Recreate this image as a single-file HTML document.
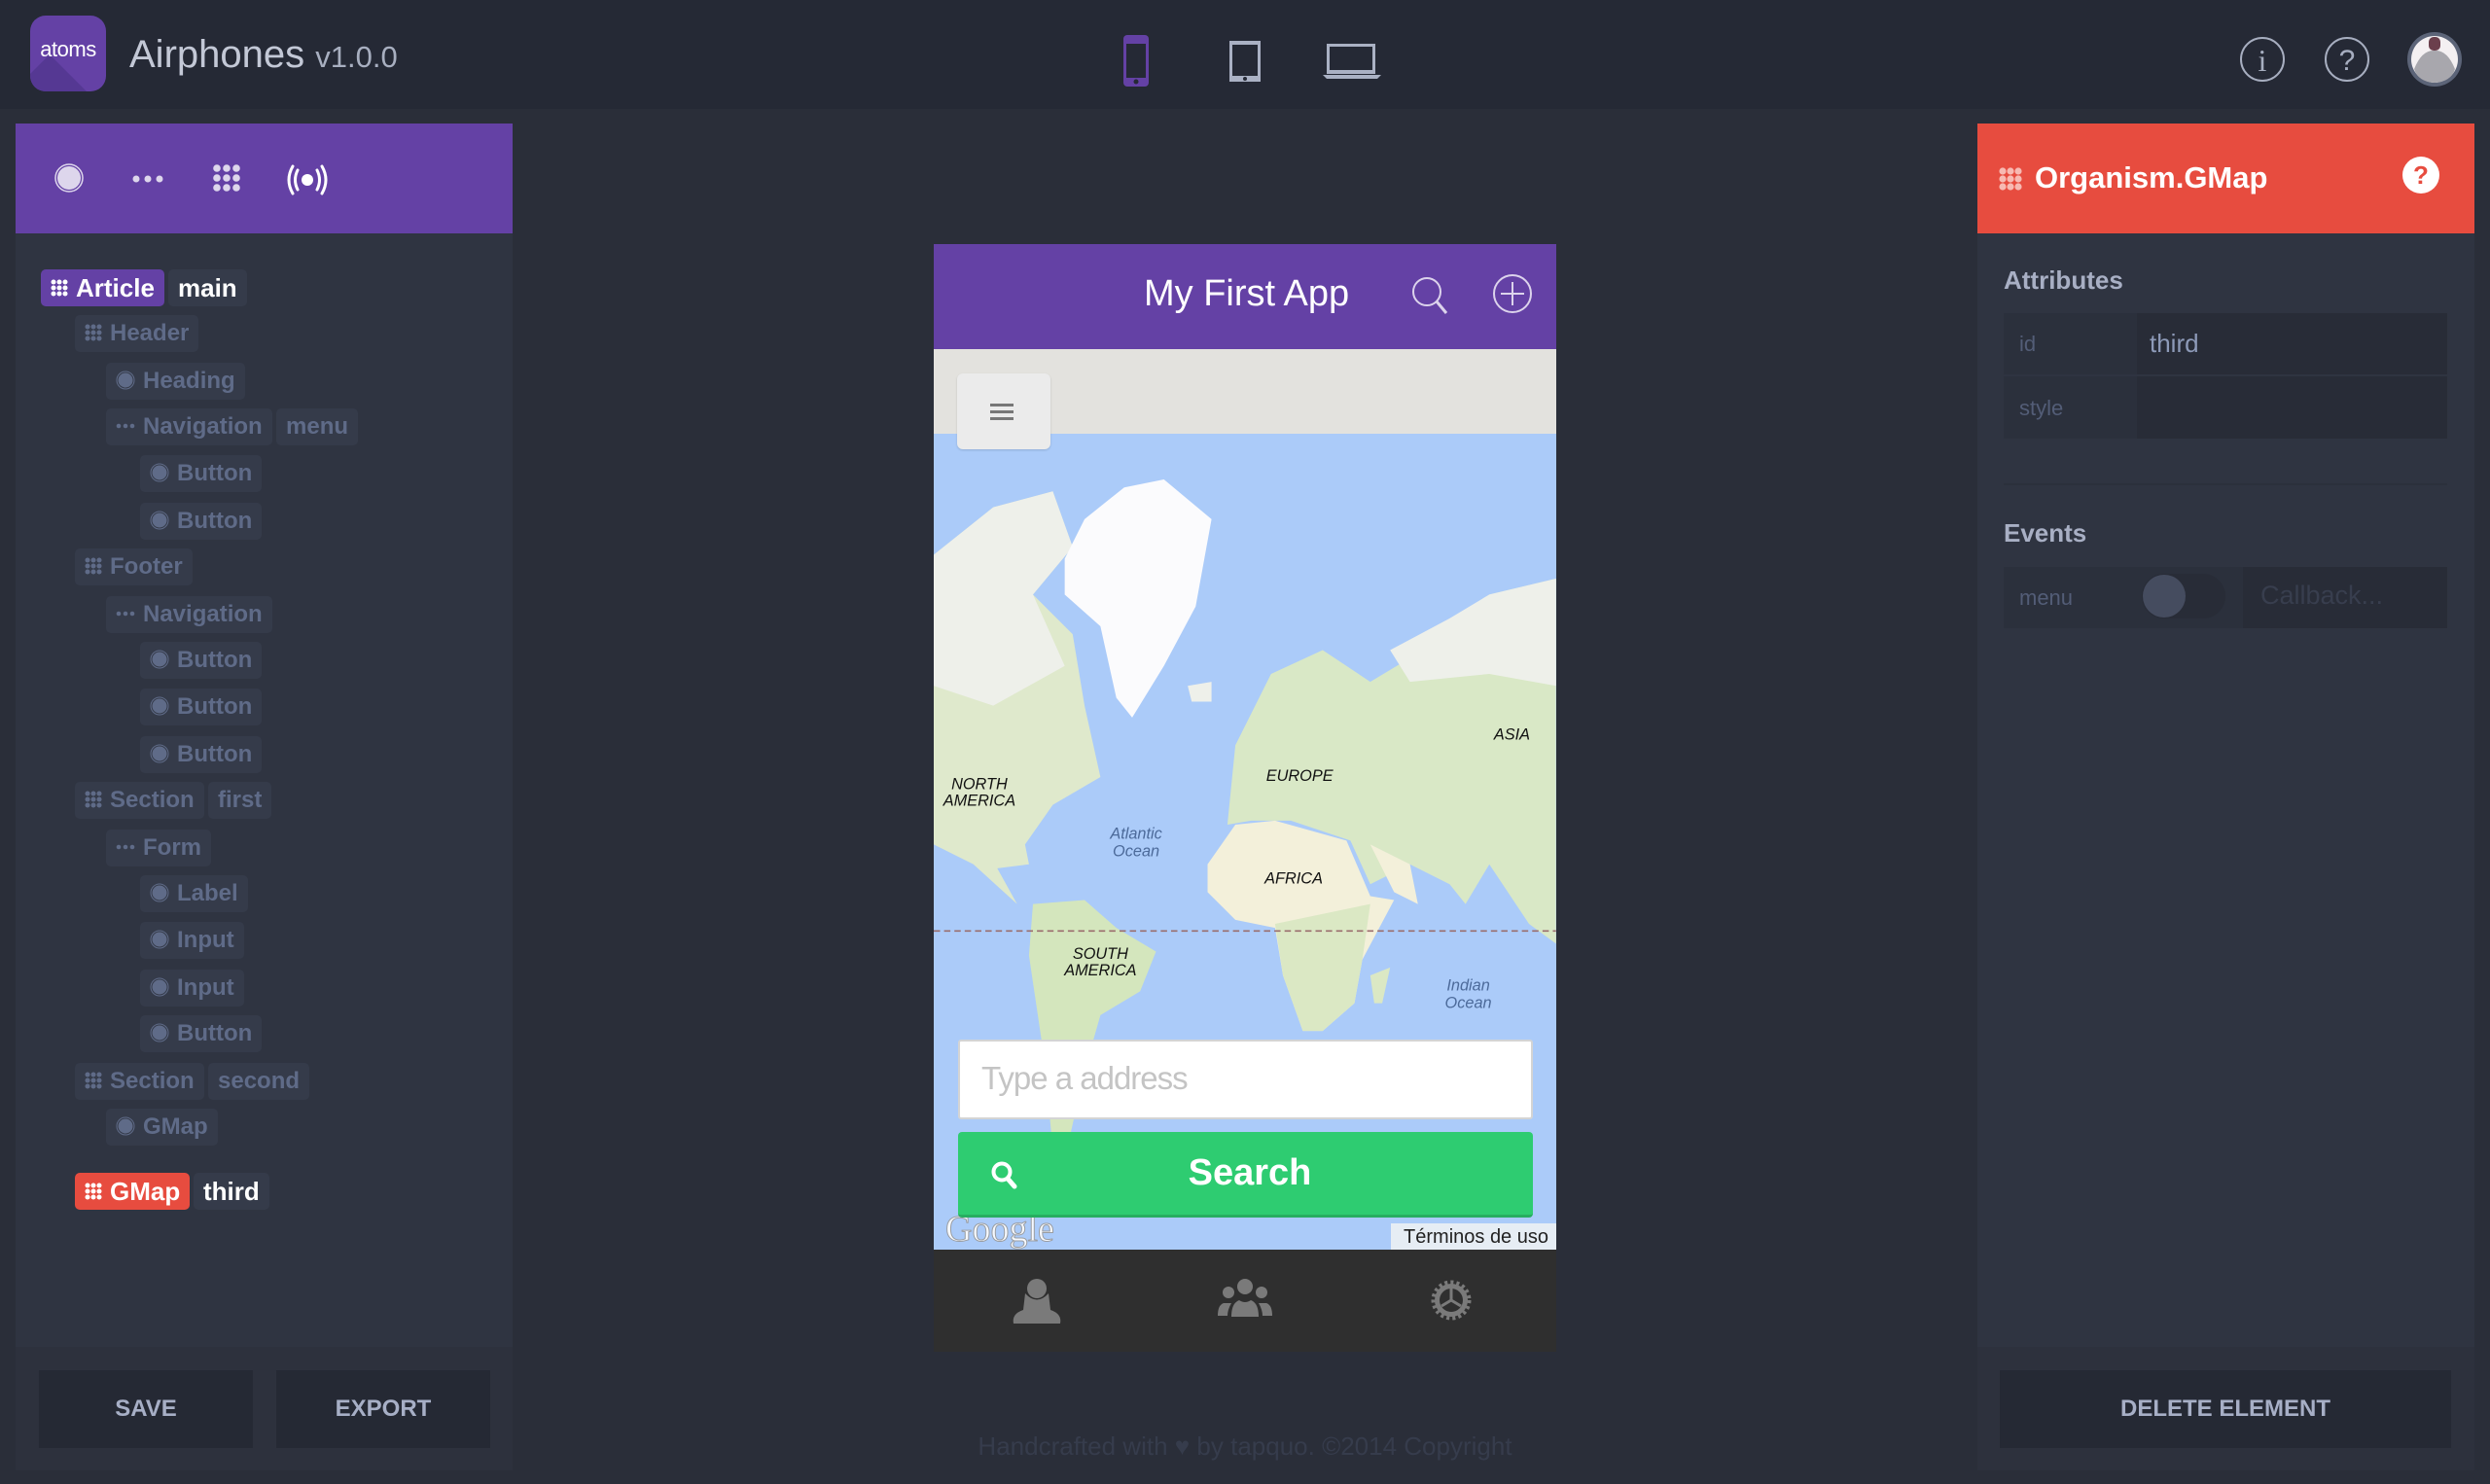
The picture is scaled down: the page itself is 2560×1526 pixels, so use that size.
<!DOCTYPE html>
<html><head><meta charset="utf-8"><style>
*{margin:0;padding:0;box-sizing:border-box}
body{width:2560px;height:1526px;background:#2a2e39;font-family:"Liberation Sans",sans-serif;position:relative;overflow:hidden}
.abs{position:absolute}
.top{left:0;top:0;width:2560px;height:112px;background:#252935}
.panel{background:#2f3441}
.tag{position:absolute;height:38px;line-height:38px;border-radius:5px;background:#353b4a;color:#5f6b88;font-weight:bold;font-size:24px;padding:0 10px;white-space:nowrap}
.tag svg{vertical-align:middle;margin-right:8px;margin-top:-4px}
.btn{position:absolute;background:#252934;color:#a7afc6;font-weight:bold;font-size:24px;text-align:center;line-height:80px;height:80px}
</style></head><body>
<div class="abs top"></div>
<!-- logo -->
<div class="abs" style="left:31px;top:16px;width:78px;height:78px;border-radius:16px;background:#6441a5;overflow:hidden">
<div class="abs" style="left:20px;top:40px;width:90px;height:90px;background:#553893;transform:rotate(45deg);transform-origin:0 0"></div>
<div class="abs" style="left:0;top:22px;width:78px;text-align:center;color:#fff;font-size:22px;letter-spacing:-0.5px">atoms</div></div>
<div class="abs" style="left:133px;top:34px;color:#c3c8d6;font-size:40px">Airphones <span style="font-size:31px;color:#a8afc0">v1.0.0</span></div>
<!-- device icons -->
<svg class="abs" style="left:1150px;top:30px" width="300" height="66">
<rect x="5" y="6" width="26" height="53" rx="4" fill="#6441a5"/><rect x="8" y="15" width="20" height="35" fill="#252935"/><circle cx="18" cy="54" r="2.5" fill="#252935"/>
<rect x="114" y="12" width="32" height="42" fill="#aab1c4"/><rect x="117" y="16" width="26" height="32" fill="#252935"/><circle cx="130" cy="51" r="2" fill="#252935"/>
<rect x="214" y="15" width="50" height="31" fill="#aab1c4"/><rect x="217" y="18" width="44" height="24" fill="#252935"/><path d="M210 47h60l-4 4h-52z" fill="#aab1c4"/>
</svg>
<svg class="abs" style="left:2290px;top:26px" width="250" height="70">
<circle cx="36" cy="35" r="22" fill="none" stroke="#a7aec0" stroke-width="2"/><text x="36" y="47" font-family="Liberation Serif" font-size="32" fill="#a7aec0" text-anchor="middle">i</text>
<circle cx="123" cy="35" r="22" fill="none" stroke="#a7aec0" stroke-width="2"/><text x="123" y="46" font-family="Liberation Sans" font-size="30" fill="#a7aec0" text-anchor="middle">?</text>
<circle cx="213" cy="35" r="28" fill="#5c6478"/><circle cx="213" cy="35" r="24" fill="#f4f0f2"/><path d="M192 45 Q200 25 213 26 Q226 25 234 45 Q230 58 213 59 Q196 58 192 45z" fill="#a8a7ad"/><rect x="207" y="12" width="12" height="14" rx="5" fill="#6b3f4c"/>
</svg>
<!-- left panel -->
<div class="abs panel" style="left:16px;top:127px;width:511px;height:1385px"></div>
<div class="abs" style="left:16px;top:1385px;width:511px;height:127px;background:#2d313d"></div>
<div class="abs" style="left:16px;top:127px;width:511px;height:113px;background:#6441a5"></div>
<svg class="abs" style="left:40px;top:150px" width="320" height="70">
<circle cx="31" cy="33" r="14" fill="none" stroke="#ddd6ec" stroke-width="1.5"/><circle cx="31" cy="33" r="12" fill="#ddd6ec"/>
<circle cx="100" cy="34" r="3.5" fill="#ddd6ec"/><circle cx="112" cy="34" r="3.5" fill="#ddd6ec"/><circle cx="124" cy="34" r="3.5" fill="#ddd6ec"/>
<g fill="#ddd6ec"><circle cx="183" cy="23" r="3.8"/><circle cx="193" cy="23" r="3.8"/><circle cx="203" cy="23" r="3.8"/><circle cx="183" cy="33" r="3.8"/><circle cx="193" cy="33" r="3.8"/><circle cx="203" cy="33" r="3.8"/><circle cx="183" cy="43" r="3.8"/><circle cx="193" cy="43" r="3.8"/><circle cx="203" cy="43" r="3.8"/></g>
<circle cx="276" cy="35" r="6" fill="#fff"/><path d="M266 25 Q261 35 266 45 M286 25 Q291 35 286 45 M261 21 Q253 35 261 49 M291 21 Q299 35 291 49" stroke="#fff" stroke-width="3" fill="none" stroke-linecap="round"/>
</svg>
<div id="tree"></div>
<div class="btn" style="left:40px;top:1409px;width:220px">SAVE</div>
<div class="btn" style="left:284px;top:1409px;width:220px">EXPORT</div>
<!-- right panel -->
<div class="abs panel" style="left:2033px;top:127px;width:511px;height:1385px"></div>
<div class="abs" style="left:2033px;top:1385px;width:511px;height:127px;background:#2d313d"></div>
<div class="abs" style="left:2033px;top:127px;width:511px;height:113px;background:#e74c3f"></div>
<svg class="abs" style="left:2055px;top:172px" width="26" height="26"><g fill="#f7b9b2"><circle cx="4" cy="4" r="3.6"/><circle cx="12" cy="4" r="3.6"/><circle cx="20" cy="4" r="3.6"/><circle cx="4" cy="12" r="3.6"/><circle cx="12" cy="12" r="3.6"/><circle cx="20" cy="12" r="3.6"/><circle cx="4" cy="20" r="3.6"/><circle cx="20" cy="20" r="3.6"/><circle cx="12" cy="20" r="3.6"/></g></svg>
<div class="abs" style="left:2092px;top:165px;color:#fff;font-weight:bold;font-size:31px">Organism.GMap</div>
<div class="abs" style="left:2470px;top:161px;width:38px;height:38px;border-radius:50%;background:#fff;color:#e74c3f;text-align:center;line-height:38px;font-size:26px;font-weight:bold">?</div>
<div class="abs" style="left:2060px;top:273px;color:#a8afc4;font-weight:bold;font-size:26px">Attributes</div>
<div class="abs" style="left:2060px;top:322px;width:456px;height:63px;background:#2b303c"></div>
<div class="abs" style="left:2197px;top:322px;width:319px;height:63px;background:#282c37"></div>
<div class="abs" style="left:2060px;top:387px;width:456px;height:64px;background:#2b303c"></div>
<div class="abs" style="left:2197px;top:387px;width:319px;height:64px;background:#282c37"></div>
<div class="abs" style="left:2076px;top:341px;color:#535d77;font-size:22px">id</div>
<div class="abs" style="left:2210px;top:338px;color:#8d9ab8;font-size:26px">third</div>
<div class="abs" style="left:2076px;top:407px;color:#535d77;font-size:22px">style</div>
<div class="abs" style="left:2060px;top:497px;width:456px;height:2px;background:#2b303c"></div>
<div class="abs" style="left:2060px;top:533px;color:#a8afc4;font-weight:bold;font-size:26px">Events</div>
<div class="abs" style="left:2060px;top:583px;width:456px;height:63px;background:#2b303c"></div>
<div class="abs" style="left:2202px;top:590px;width:86px;height:46px;border-radius:23px;background:#282c37"></div>
<div class="abs" style="left:2203px;top:591px;width:44px;height:44px;border-radius:50%;background:#454c5f"></div>
<div class="abs" style="left:2306px;top:583px;width:210px;height:63px;background:#282c37"></div>
<div class="abs" style="left:2076px;top:602px;color:#535d77;font-size:22px">menu</div>
<div class="abs" style="left:2324px;top:597px;color:#383e4e;font-size:27px">Callback...</div>
<div class="btn" style="left:2056px;top:1409px;width:464px">DELETE ELEMENT</div>
<!-- phone -->
<div class="abs" style="left:960px;top:251px;width:640px;height:1139px;background:#e3e2de;overflow:hidden">
<div class="abs" style="left:0;top:0;width:640px;height:108px;background:#6441a5"></div>
<div class="abs" style="left:216px;top:30px;color:#fff;font-size:38px">My First App</div>
<svg class="abs" style="left:480px;top:30px" width="160" height="50"><circle cx="27" cy="19" r="14" fill="none" stroke="#dcd3ec" stroke-width="2"/><path d="M37 29l10 12" stroke="#dcd3ec" stroke-width="3"/><circle cx="115" cy="21" r="19" fill="none" stroke="#dcd3ec" stroke-width="2"/><path d="M115 9v24M103 21h24" stroke="#dcd3ec" stroke-width="2"/></svg>
<svg class="abs" style="left:0;top:195px" width="640" height="839" viewBox="0 0 640 839">
<rect width="640" height="839" fill="#abcbf9"/>
<g transform="translate(0,-6) scale(0.408)">
<path d="M0 320 L150 200 L300 160 L350 300 L250 420 L350 520 L380 700 L420 880 L300 950 L230 1050 L240 1100 L160 1110 L210 1200 L100 1100 L0 1050Z" fill="#dfe9cc"/>
<path d="M0 320 L150 200 L300 160 L350 300 L250 420 L330 600 L150 700 L0 650Z" fill="#eef0ea"/>
<path d="M330 330 L380 230 L480 150 L580 130 L700 230 L660 450 L580 600 L500 730 L460 680 L420 500 L330 420Z" fill="#fbfbfd"/>
<path d="M250 1200 L380 1190 L460 1260 L560 1320 L520 1420 L420 1480 L380 1620 L340 1800 L300 1820 L280 1600 L240 1330Z" fill="#d4e6bd"/>
<path d="M740 1000 L760 800 L850 620 L980 560 L1100 640 L1300 520 L1400 420 L1568 380 L1568 1300 L1500 1250 L1400 1100 L1340 1200 L1300 1150 L1200 1100 L1100 1150 L1050 1040 L900 990 L800 990Z" fill="#d9e8c6"/>
<path d="M1150 560 L1300 480 L1400 420 L1568 380 L1568 650 L1400 620 L1200 640Z" fill="#eef0ea"/>
<path d="M690 1100 L760 1000 L860 990 L1040 1040 L1100 1180 L1160 1190 L1080 1340 L1060 1450 L980 1520 L930 1520 L880 1380 L860 1260 L760 1240 L690 1170Z" fill="#f3f0da"/>
<path d="M860 1250 L1100 1200 L1080 1340 L1060 1450 L980 1520 L930 1520 L880 1380Z" fill="#dbe8c4"/>
<path d="M1100 1050 L1200 1100 L1220 1200 L1160 1170 Z" fill="#f3f0da"/>
<path d="M640 650 L700 640 L700 690 L650 690Z" fill="#eef0ea"/>
<path d="M1100 1380 L1150 1360 L1130 1450 L1110 1450Z" fill="#dbe8c4"/>
<path d="M0 1268 H1568" stroke="#9a6d6d" stroke-width="4" stroke-dasharray="16 10"/>
<g font-family="Liberation Sans" font-size="40" font-style="italic" text-anchor="middle" fill="#111">
<text x="115" y="910">NORTH</text><text x="115" y="952">AMERICA</text><text x="922" y="890">EUROPE</text><text x="1457" y="785">ASIA</text><text x="907" y="1148">AFRICA</text><text x="420" y="1338">SOUTH</text><text x="420" y="1380">AMERICA</text>
<g fill="#4c6a9a"><text x="510" y="1035">Atlantic</text><text x="510" y="1080">Ocean</text><text x="1347" y="1418">Indian</text><text x="1347" y="1462">Ocean</text></g></g>
</g>
<text x="12" y="830" font-family="Liberation Serif" font-size="38" fill="#fff" stroke="#999" stroke-width="1" opacity="0.9">Google</text>
<rect x="470" y="812" width="170" height="27" fill="#f5f5f3" opacity="0.8"/>
<text x="632" y="832" font-family="Liberation Sans" font-size="20" fill="#222" text-anchor="end">Términos de uso</text>
</svg>
<div class="abs" style="left:24px;top:133px;width:96px;height:78px;border-radius:6px;background:#ebebeb;box-shadow:0 1px 2px rgba(0,0,0,.15)"></div>
<div class="abs" style="left:58px;top:164px;width:24px;height:3px;background:#777;box-shadow:0 7px 0 #777,0 14px 0 #777"></div>
<div class="abs" style="left:25px;top:818px;width:591px;height:82px;background:#fff;border:2px solid #d4d4d4;border-radius:3px"></div>
<div class="abs" style="left:49px;top:839px;color:#c4c4c4;font-size:33px;letter-spacing:-1px">Type a address</div>
<div class="abs" style="left:25px;top:913px;width:591px;height:88px;background:#2ecc71;border-radius:4px;border-bottom:3px solid #27ae60"></div>
<svg class="abs" style="left:58px;top:942px" width="30" height="32"><circle cx="12" cy="12" r="8.5" fill="none" stroke="#fff" stroke-width="4"/><path d="M18 19l7 8" stroke="#fff" stroke-width="5" stroke-linecap="round"/></svg>
<div class="abs" style="left:0;top:934px;width:640px;padding-left:10px;text-align:center;color:#fff;font-weight:bold;font-size:38px">Search</div>
<div class="abs" style="left:0;top:1034px;width:640px;height:105px;background:#2f2f2f"></div>
<svg class="abs" style="left:0;top:1034px" width="640" height="105">
<g fill="#7a7a7a"><circle cx="106" cy="40" r="10"/><path d="M94 45 Q106 58 118 45 L120 62 Q132 66 130 76 H82 Q80 66 92 62Z"/>
<circle cx="320" cy="38" r="8"/><path d="M306 69 Q306 55 314 52 Q320 56 326 52 Q334 55 334 69Z"/><circle cx="303" cy="44" r="6"/><circle cx="337" cy="44" r="6"/><path d="M292 68 Q292 57 298 55 L306 55 Q302 62 302 68Z M348 68 Q348 57 342 55 L334 55 Q338 62 338 68Z"/>
<circle cx="532" cy="52" r="17"/></g>
<circle cx="532" cy="52" r="18" fill="none" stroke="#7a7a7a" stroke-width="5" stroke-dasharray="3 3"/>
<circle cx="532" cy="52" r="12" fill="#2f2f2f"/><path d="M532 52V40M532 52l-10 6M532 52l10 6" stroke="#7a7a7a" stroke-width="3"/>
</svg>
</div>
<div class="abs" style="left:960px;top:1472px;width:640px;text-align:center;color:#363c4c;font-size:26px">Handcrafted with ♥ by tapquo. ©2014 Copyright</div>
<script>
var rows=[[42,181,'g','Article','main','p'],[77,210,'g','Header'],[109,240,'d','Heading'],[109,269,'e','Navigation','menu'],[144,298,'d','Button'],[144,328,'d','Button'],[77,357,'g','Footer'],[109,387,'e','Navigation'],[144,416,'d','Button'],[144,445,'d','Button'],[144,475,'d','Button'],[77,504,'g','Section','first'],[109,534,'e','Form'],[144,563,'d','Label'],[144,592,'d','Input'],[144,622,'d','Input'],[144,651,'d','Button'],[77,681,'g','Section','second'],[109,710,'d','GMap'],[77,750,'g','GMap','third','r']];
var h='';
rows.forEach(function(r){
var y=Math.round(r[1]*1.633)-19, act=r[5], c=act?'#fff':'#5f6b88', bg=act=='p'?'#6441a5':act=='r'?'#e74c3f':'#353b4a';
var ic='';
if(r[2]=='g'){ic='<svg width="18" height="18">';for(var i=0;i<3;i++)for(var j=0;j<3;j++)ic+='<circle cx="'+(3+j*6)+'" cy="'+(3+i*6)+'" r="2.5" fill="'+c+'"/>';ic+='</svg>';}
else if(r[2]=='d'){ic='<svg width="20" height="20"><circle cx="10" cy="10" r="9" fill="none" stroke="'+c+'" stroke-width="1"/><circle cx="10" cy="10" r="7.5" fill="'+c+'"/></svg>';}
else{ic='<svg width="20" height="8"><circle cx="3" cy="4" r="2.3" fill="'+c+'"/><circle cx="10" cy="4" r="2.3" fill="'+c+'"/><circle cx="17" cy="4" r="2.3" fill="'+c+'"/></svg>';}
h+='<div class="tag" id="t'+y+'" style="left:'+r[0]+'px;top:'+y+'px;background:'+bg+';color:'+c+';font-size:'+(act?26:24)+'px">'+ic+r[3]+'</div>';
if(r[4])h+='<div class="tag x" data-y="'+y+'" style="top:'+y+'px;color:'+(act?'#fff':'#5f6b88')+';font-size:'+(act?26:24)+'px">'+r[4]+'</div>';
});
document.getElementById('tree').innerHTML=h;
document.querySelectorAll('.tag.x').forEach(function(e){var p=e.previousElementSibling;e.style.left=(p.offsetLeft+p.offsetWidth+4)+'px';});
</script>
</body></html>
